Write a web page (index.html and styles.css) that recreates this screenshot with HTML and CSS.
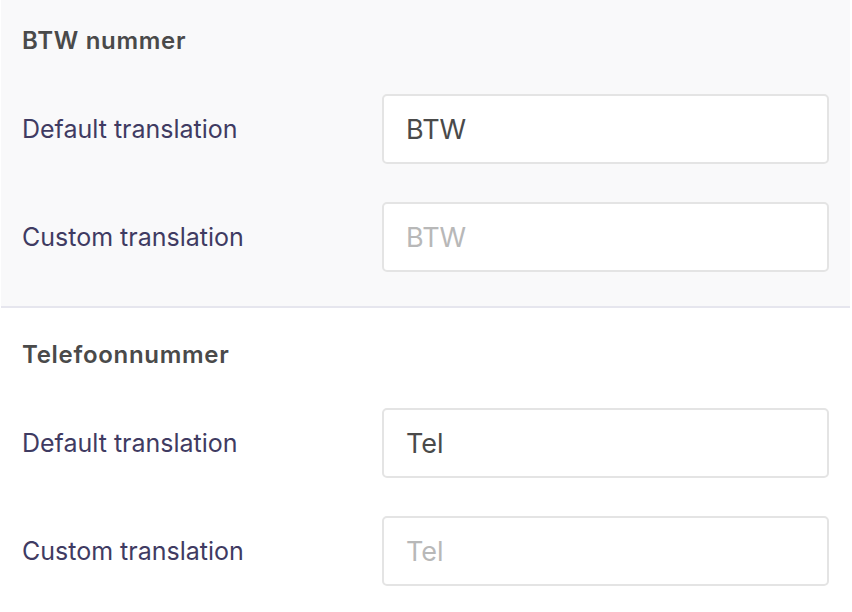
FILE: index.html
```html
<!DOCTYPE html>
<html lang="nl">
<head>
<meta charset="utf-8">
<title>Translations</title>
<link rel="stylesheet" href="styles.css">
</head>
<body>
<div class="translation-list">
  <section class="term term--active">
    <h3 class="term__title">BTW nummer</h3>
    <div class="term__rows">
      <label class="field">
        <span class="field__label">Default translation</span>
        <input class="field__input" type="text" value="BTW" readonly>
      </label>
      <label class="field">
        <span class="field__label">Custom translation</span>
        <input class="field__input" type="text" placeholder="BTW">
      </label>
    </div>
  </section>
  <section class="term">
    <h3 class="term__title">Telefoonnummer</h3>
    <div class="term__rows">
      <label class="field">
        <span class="field__label">Default translation</span>
        <input class="field__input" type="text" value="Tel" readonly>
      </label>
      <label class="field">
        <span class="field__label">Custom translation</span>
        <input class="field__input" type="text" placeholder="Tel">
      </label>
    </div>
  </section>
</div>
</body>
</html>
```

FILE: styles.css
```css
* {
  box-sizing: border-box;
}

html, body {
  margin: 0;
  padding: 0;
  background: #ffffff;
  overflow: hidden;
}

body {
  font-family: Inter, "Noto Sans", "Liberation Sans", sans-serif;
  width: 852px;
  height: 612px;
}

/* list is scrolled a few pixels down */
.translation-list {
  margin-top: -6px;
}

.term {
  margin: 0 2px 0 1px;
  padding: 29px 21px 34px 21px;
  border-bottom: 2px solid #e6e6ee;
}

.term--active {
  background: #f9f9fa;
}

.term__title {
  margin: 0;
  font-size: 24px;
  line-height: 36px;
  font-weight: 600;
  letter-spacing: 0.7px;
  color: #4a4a4a;
}

.term__rows {
  display: flex;
  flex-direction: column;
  gap: 38px;
  margin-top: 35px;
}

.field {
  display: flex;
  align-items: center;
}

.field__label {
  width: 360px;
  flex: none;
  font-size: 25px;
  color: #3f3b62;
}

.field__input {
  width: 447px;
  height: 70px;
  padding: 0 22px;
  border: 2px solid #e4e4e4;
  border-radius: 5px;
  background: #ffffff;
  font-family: inherit;
  font-size: 27px;
  color: #4a4a4a;
  outline: none;
}

.field__input::placeholder {
  color: #b8b8b8;
  opacity: 1;
}
```
